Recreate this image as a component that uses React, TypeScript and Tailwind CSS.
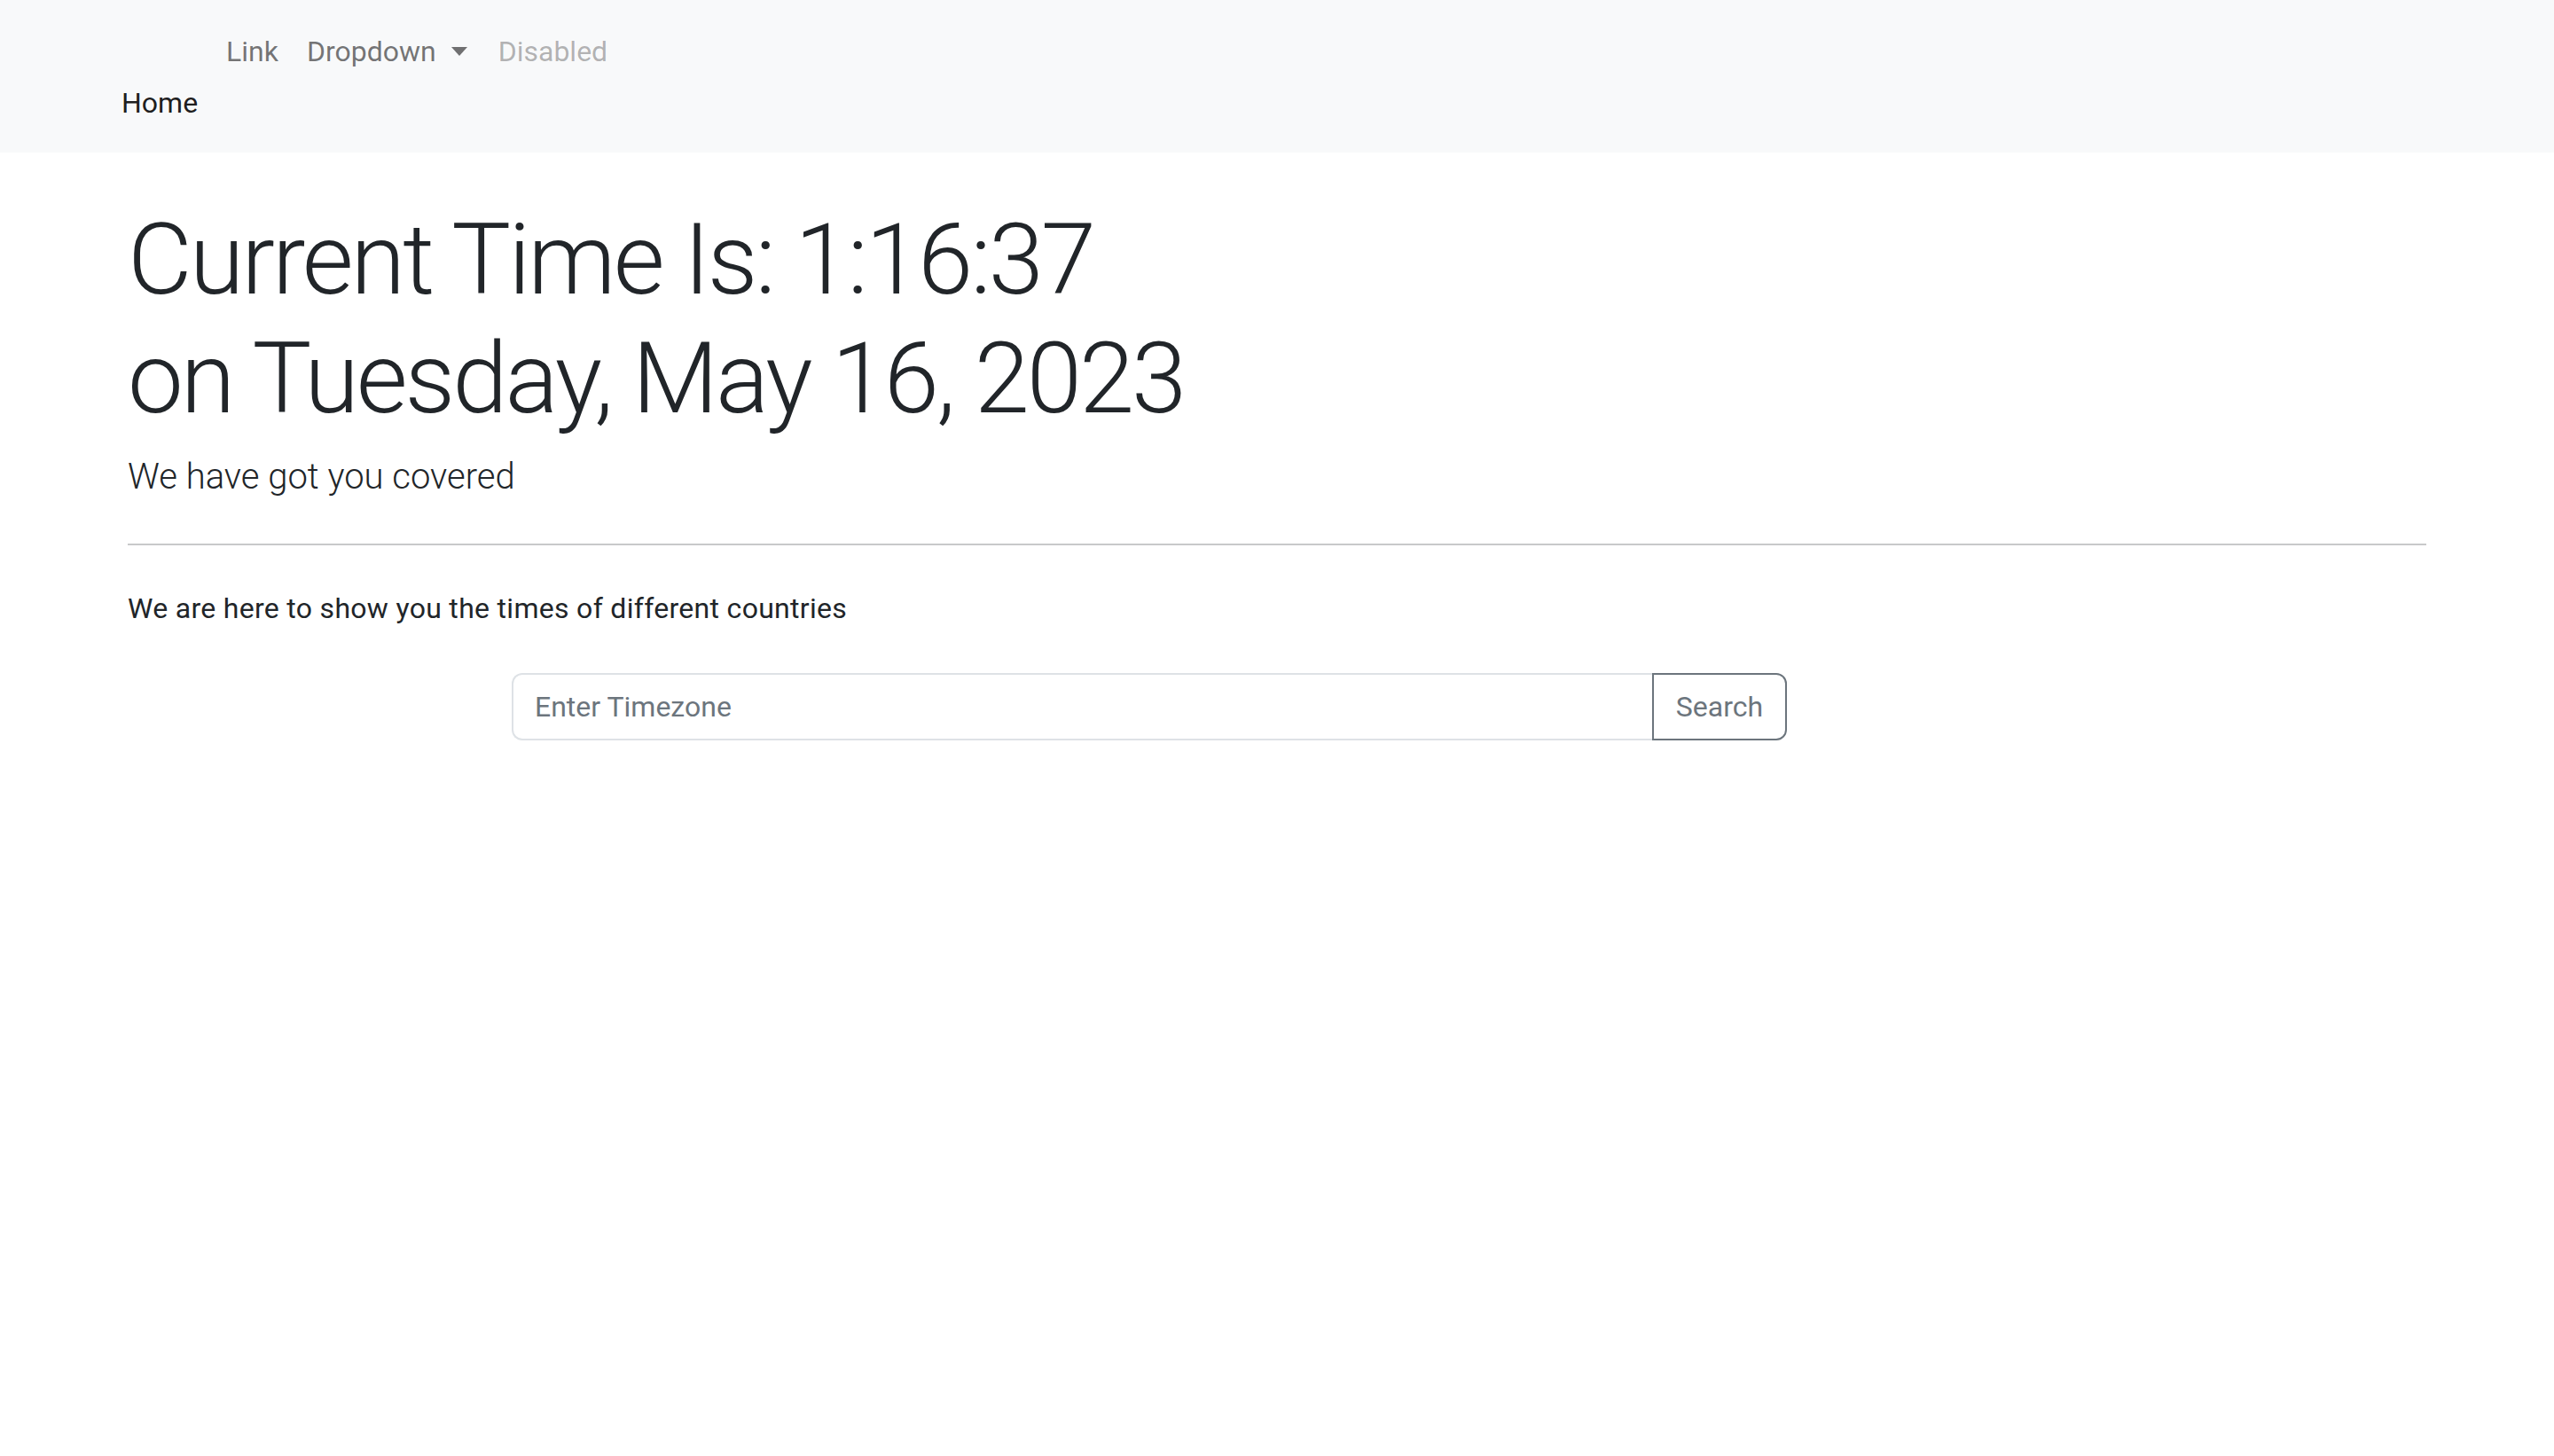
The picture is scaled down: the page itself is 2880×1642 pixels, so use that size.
import React from "react";

export default function App() {
  const font = { fontFamily: "Roboto, 'Noto Sans', 'Liberation Sans', sans-serif" };
  return (
    <div className="min-h-[1642px] bg-white text-[#212529]" style={font}>
      <nav className="bg-[#f8f9fa] h-[172px] pt-[34px]">
        <div className="flex h-[48px] items-center pl-[255px] text-[32px] leading-[48px]">
          <a className="text-[rgba(0,0,0,0.55)]">Link</a>
          <a className="ml-[32px] flex items-center text-[rgba(0,0,0,0.55)]">
            Dropdown
            <span className="ml-[17px] inline-block h-0 w-0 border-t-[10px] border-x-[9px] border-b-0 border-t-[rgba(0,0,0,0.55)] border-x-transparent"></span>
          </a>
          <a className="ml-[35px] text-[rgba(0,0,0,0.3)]">Disabled</a>
        </div>
        <div className="mt-[10px] h-[48px] pl-[137px] text-[32px] leading-[48px] text-[rgba(0,0,0,0.9)]">
          Home
        </div>
      </nav>
      <main className="mx-auto w-[2592px]">
        <h1 className="mt-[54px] text-[112px] font-light leading-[134px] tracking-[-3px]">
          Current Time Is: 1:16:37
          <br />
          on Tuesday, May 16, 2023
        </h1>
        <p className="mt-[14px] text-[40px] font-light leading-[60px]">We have got you covered</p>
        <hr className="mt-[45px] border-0 border-t-2 border-[#c8c9ca]" />
        <p className="mt-[47px] text-[32px] leading-[48px] tracking-[0.3px]">
          We are here to show you the times of different countries
        </p>
        <div className="ml-[433px] mt-[49px] flex h-[76px] w-[1438px]">
          <input
            className="h-full flex-1 rounded-l-[12px] border-2 border-r-0 border-[#dee2e6] bg-white px-[24px] text-[32px] text-[#212529] outline-none placeholder:text-[#6c757d]"
            style={font}
            placeholder="Enter Timezone"
          />
          <button
            className="h-full w-[152px] rounded-r-[12px] border-2 border-[#6c757d] bg-white text-[32px] text-[#6c757d]"
            style={font}
          >
            Search
          </button>
        </div>
      </main>
    </div>
  );
}
